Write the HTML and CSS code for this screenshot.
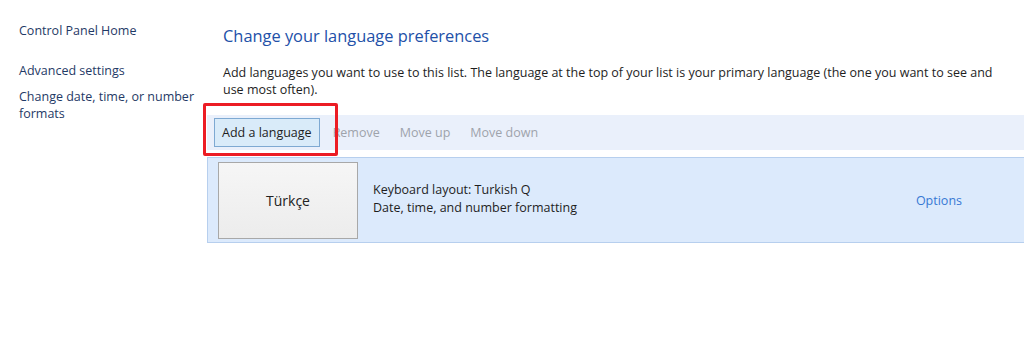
FILE: index.html
```html
<!DOCTYPE html>
<html lang="en">
<head>
    <meta charset="UTF-8">
    <title>Language</title>
    <link rel="stylesheet" href="styles.css">
</head>
<body>
    <div class="page">
        <nav class="sidebar">
            <a class="nav-home">Control Panel Home</a>
            <a>Advanced settings</a>
            <a>Change date, time, or number formats</a>
        </nav>

        <main class="content">
            <h1>Change your language preferences</h1>
            <p class="intro">Add languages you want to use to this list. The language at the top of your list is your primary language (the one you want to see and use most often).</p>

            <div class="toolbar">
                <button class="tool-btn active">Add a language</button>
                <span class="tool disabled">Remove</span>
                <span class="tool disabled">Move up</span>
                <span class="tool disabled">Move down</span>
                <div class="highlight"></div>
            </div>

            <div class="lang-row">
                <div class="lang-tile">Türkçe</div>
                <div class="lang-info">
                    <div>Keyboard layout: Turkish Q</div>
                    <div>Date, time, and number formatting</div>
                </div>
                <a class="lang-options">Options</a>
            </div>
        </main>
    </div>
</body>
</html>
```

FILE: styles.css
```css
body {
    margin: 0;
    font-family: 'Open Sans', 'Noto Sans', sans-serif;
    font-size: 12.5px;
    color: #1e1e1e;
    background: #fff;
    overflow: hidden;
}
.page {
    display: flex;
    width: 1040px;
}
.sidebar {
    width: 188px;
    flex-shrink: 0;
    padding: 22px 0 0 19px;
    display: flex;
    flex-direction: column;
}
.sidebar a {
    color: #1f3a66;
    line-height: 17px;
    margin-bottom: 9px;
    width: 180px;
}
.sidebar .nav-home {
    margin-bottom: 23px;
}
.content {
    flex: 1;
}
h1 {
    margin: 25px 0 0 16px;
    font-size: 16.4px;
    font-weight: normal;
    color: #2250a8;
    line-height: 22px;
}
.intro {
    margin: 17px 24px 0 16px;
    line-height: 17px;
}
.toolbar {
    position: relative;
    margin-top: 17px;
    height: 35px;
    background: #eaf0fb;
    display: flex;
    align-items: center;
    padding-left: 7px;
}
.tool-btn {
    font-family: inherit;
    font-size: 12.5px;
    color: #1e1e1e;
    height: 29px;
    padding: 0 7px;
    background: #d9ebf9;
    border: 1px solid #7ea9d2;
    margin-right: 13px;
}
.tool {
    margin-right: 20px;
}
.disabled {
    color: #9ea3ab;
}
.highlight {
    position: absolute;
    left: -4px;
    top: -12px;
    width: 129px;
    height: 47px;
    border: 3px solid #ec1c24;
    border-radius: 2px;
}
.lang-row {
    margin-top: 7px;
    height: 84px;
    background: #dceafc;
    border: 1px solid #b7cfee;
    border-right: none;
    display: flex;
    align-items: center;
    padding-left: 10px;
}
.lang-tile {
    width: 138px;
    height: 75px;
    border: 1px solid #a8a8a8;
    background: linear-gradient(#f6f6f6, #ececec);
    display: flex;
    align-items: center;
    justify-content: center;
    font-size: 14px;
    color: #222;
}
.lang-info {
    margin-left: 15px;
    line-height: 18px;
    flex: 1;
    padding-bottom: 2px;
}
.lang-options {
    color: #3778d4;
    margin-right: 78px;
}
```
